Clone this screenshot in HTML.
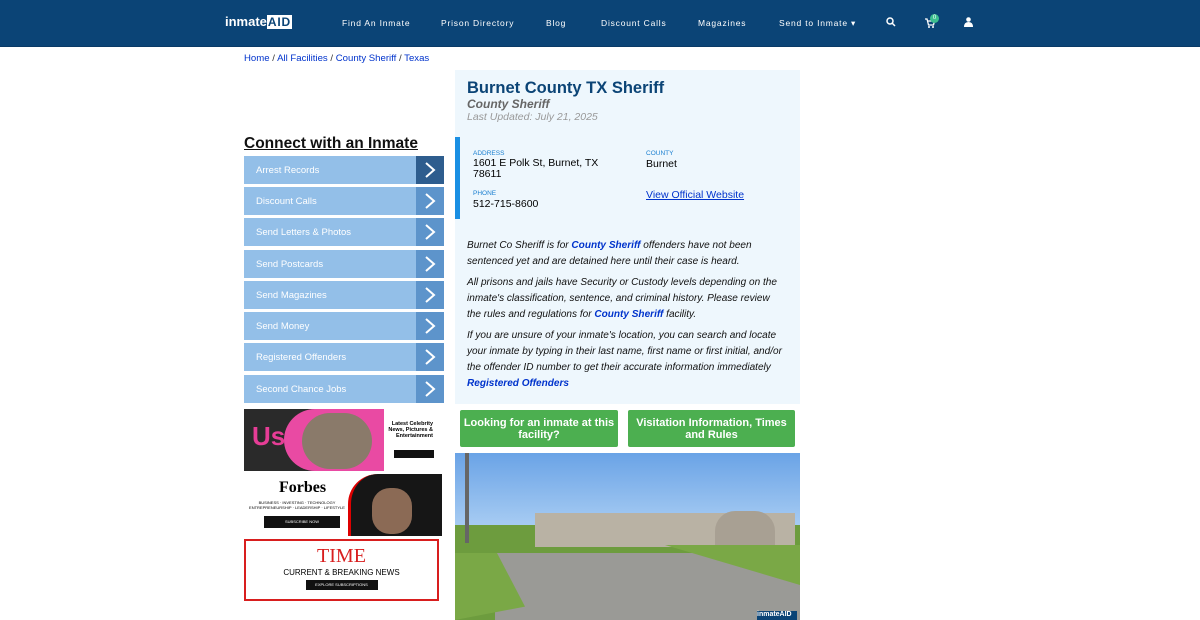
<!DOCTYPE html><html><head><style>
body{margin:0;width:1200px;height:620px;overflow:hidden;background:#fff;font-family:"Liberation Sans",sans-serif;position:relative}
.nav{position:absolute;left:0;top:0;width:1200px;height:46px;background:#0b4476;border-bottom:1px solid #0a3a66}
.nav span{position:absolute;top:18px;color:#fff;font-size:8.5px;letter-spacing:.8px}
.a{position:absolute}
.crumb{left:244px;top:53px;font-size:9.6px;color:#333}
.crumb b{font-weight:normal;color:#0033cc}
.side{left:244px;width:200px;height:28px;background:#93bfe8;color:#fff;font-size:9.5px}
.side span{position:absolute;left:12px;top:9px}
.side i{position:absolute;right:0;top:0;width:28px;height:28px;background:#5d94cb}
.side i svg{position:absolute;left:7px;top:5px}
.btn{top:410px;height:37px;background:#4caf50;color:#fff;font-weight:bold;font-size:11px;text-align:center;border-radius:2px;line-height:12px;display:flex;align-items:center;justify-content:center}
.p{font-size:10.05px;font-style:italic;color:#111;line-height:16px;margin:0 0 5px}
.p b{color:#0033cc}
.lab{font-size:6.5px;color:#1a7fd0}
</style></head><body>
<div class="nav">
<span style="left:225px;top:14px;font-size:13px;font-weight:bold;letter-spacing:0">inmate<span style="position:static;background:#fff;color:#0b4476;padding:0 1px;font-size:12px">AID</span></span>
<span style="left:342px">Find An Inmate</span>
<span style="left:441px">Prison Directory</span>
<span style="left:546px">Blog</span>
<span style="left:601px">Discount Calls</span>
<span style="left:698px">Magazines</span>
<span style="left:779px">Send to Inmate ▾</span>
<svg class="a" style="left:886px;top:17px" width="10" height="10"><circle cx="4" cy="4" r="3" stroke="#fff" stroke-width="1.5" fill="none"/><path d="M6 6L9 9" stroke="#fff" stroke-width="1.5"/></svg>
<svg class="a" style="left:925px;top:18px" width="10" height="10"><path d="M0 1H2L3.5 7H8.5L9.5 3H3" stroke="#fff" stroke-width="1.3" fill="none"/><circle cx="4" cy="9" r="1" fill="#fff"/><circle cx="8" cy="9" r="1" fill="#fff"/></svg>
<div class="a" style="left:930px;top:14px;width:9px;height:9px;border-radius:50%;background:#3cbf8f;color:#fff;font-size:6px;text-align:center;line-height:9px">0</div>
<svg class="a" style="left:964px;top:17px" width="9" height="10"><circle cx="4.5" cy="2.5" r="2.3" fill="#fff"/><path d="M0 10Q0 5 4.5 5Q9 5 9 10Z" fill="#fff"/></svg>
</div>
<div class="a crumb"><b>Home</b> / <b>All Facilities</b> / <b>County Sheriff</b> / <b>Texas</b></div>
<div class="a" style="left:244px;top:135px;font-size:15.5px;font-weight:bold;text-decoration:underline;color:#111">Connect with an Inmate</div>
<div class="a side" style="top:156px"><span>Arrest Records</span><i style="background:#2e5d8e"><svg width="14" height="18"><path d="M3 2L11 9L3 16" stroke="#fff" stroke-width="2" fill="none"/></svg></i></div>
<div class="a side" style="top:187px"><span>Discount Calls</span><i><svg width="14" height="18"><path d="M3 2L11 9L3 16" stroke="#fff" stroke-width="2" fill="none"/></svg></i></div>
<div class="a side" style="top:218px"><span>Send Letters &amp; Photos</span><i><svg width="14" height="18"><path d="M3 2L11 9L3 16" stroke="#fff" stroke-width="2" fill="none"/></svg></i></div>
<div class="a side" style="top:250px"><span>Send Postcards</span><i><svg width="14" height="18"><path d="M3 2L11 9L3 16" stroke="#fff" stroke-width="2" fill="none"/></svg></i></div>
<div class="a side" style="top:281px"><span>Send Magazines</span><i><svg width="14" height="18"><path d="M3 2L11 9L3 16" stroke="#fff" stroke-width="2" fill="none"/></svg></i></div>
<div class="a side" style="top:312px"><span>Send Money</span><i><svg width="14" height="18"><path d="M3 2L11 9L3 16" stroke="#fff" stroke-width="2" fill="none"/></svg></i></div>
<div class="a side" style="top:343px"><span>Registered Offenders</span><i><svg width="14" height="18"><path d="M3 2L11 9L3 16" stroke="#fff" stroke-width="2" fill="none"/></svg></i></div>
<div class="a side" style="top:375px"><span>Second Chance Jobs</span><i><svg width="14" height="18"><path d="M3 2L11 9L3 16" stroke="#fff" stroke-width="2" fill="none"/></svg></i></div>
<!-- ads -->
<div class="a" style="left:244px;top:409px;width:195px;height:62px;background:#fff">
<div class="a" style="left:0;top:0;width:140px;height:62px;background:#2a2a2a"></div>
<div class="a" style="left:40px;top:0;width:100px;height:62px;background:#e94aa3;border-radius:60px 0 0 60px"></div>
<div class="a" style="left:58px;top:4px;width:70px;height:56px;background:#8a7a6a;border-radius:30px"></div>
<div class="a" style="left:8px;top:12px;font-size:26px;font-weight:bold;color:#e63d96">Us</div>
<div class="a" style="left:143px;top:12px;font-size:5.5px;font-weight:bold;text-align:right;width:46px">Latest Celebrity News, Pictures &amp; Entertainment</div>
<div class="a" style="left:150px;top:41px;width:40px;height:8px;background:#111"></div>
</div>
<div class="a" style="left:244px;top:474px;width:195px;height:62px;background:#fff">
<div class="a" style="left:35px;top:5px;font-family:'Liberation Serif',serif;font-weight:bold;font-size:16px">Forbes</div>
<div class="a" style="left:3px;top:26px;font-size:4px;width:100px;text-align:center">BUSINESS · INVESTING · TECHNOLOGY ENTREPRENEURSHIP · LEADERSHIP · LIFESTYLE</div>
<div class="a" style="left:20px;top:42px;width:76px;height:12px;background:#111;color:#fff;font-size:4px;text-align:center;line-height:12px">SUBSCRIBE NOW</div>
<div class="a" style="left:104px;top:0;width:91px;height:62px;background:#161616;border-radius:30px 0 0 0;border-left:3px solid #d00"></div>
<div class="a" style="left:128px;top:14px;width:40px;height:46px;background:#8b6a55;border-radius:18px"></div>
</div>
<div class="a" style="left:244px;top:539px;width:191px;height:58px;border:2px solid #d81e1e;background:#fff;text-align:center">
<div style="font-family:'Liberation Serif',serif;color:#d81e1e;font-size:20px;margin-top:5px;line-height:20px">TIME</div>
<div style="font-size:8px;margin-top:2px">CURRENT &amp; BREAKING NEWS</div>
<div style="margin:3px auto 0;width:72px;height:10px;background:#111;color:#fff;font-size:4px;line-height:10px">EXPLORE SUBSCRIPTIONS</div>
</div>
<!-- right -->
<div class="a" style="left:455px;top:70px;width:345px;height:334px;background:#eef7fd"></div>
<div class="a" style="left:467px;top:79px;font-size:16.5px;font-weight:bold;color:#0b4476">Burnet County TX Sheriff</div>
<div class="a" style="left:467px;top:97px;font-size:12px;font-weight:bold;font-style:italic;color:#666">County Sheriff</div>
<div class="a" style="left:467px;top:111px;font-size:10.5px;font-style:italic;color:#999">Last Updated: July 21, 2025</div>
<div class="a" style="left:455px;top:137px;width:345px;height:82px;background:#eef7fd;border-left:5px solid #1a8fe3;box-sizing:border-box"></div>
<div class="a lab" style="left:473px;top:150px">ADDRESS</div>
<div class="a" style="left:473px;top:158px;font-size:10.5px;line-height:11px">1601 E Polk St, Burnet, TX<br>78611</div>
<div class="a lab" style="left:473px;top:190px">PHONE</div>
<div class="a" style="left:473px;top:198px;font-size:10.5px">512-715-8600</div>
<div class="a lab" style="left:646px;top:150px">COUNTY</div>
<div class="a" style="left:646px;top:158px;font-size:10.5px">Burnet</div>
<div class="a" style="left:646px;top:189px;font-size:10.5px;color:#0033cc;text-decoration:underline">View Official Website</div>
<div class="a" style="left:467px;top:238px;width:317px">
<p class="p">Burnet Co Sheriff is for <b>County Sheriff</b> offenders have not been sentenced yet and are detained here until their case is heard.</p>
<p class="p">All prisons and jails have Security or Custody levels depending on the inmate's classification, sentence, and criminal history. Please review the rules and regulations for <b>County Sheriff</b> facility.</p>
<p class="p">If you are unsure of your inmate's location, you can search and locate your inmate by typing in their last name, first name or first initial, and/or the offender ID number to get their accurate information immediately <b>Registered Offenders</b></p>
</div>
<div class="a btn" style="left:460px;width:158px">Looking for an inmate at this<br>facility?</div>
<div class="a btn" style="left:628px;width:167px">Visitation Information, Times<br>and Rules</div>
<div class="a" style="left:455px;top:453px;width:345px;height:167px;overflow:hidden;background:linear-gradient(#6aa3e6,#a9cdf3 45%)">
<div class="a" style="left:0;top:72px;width:345px;height:95px;background:#6d9c3e"></div>
<div class="a" style="left:80px;top:60px;width:260px;height:34px;background:#b9b2a4"></div>
<div class="a" style="left:260px;top:58px;width:60px;height:36px;background:#a8a093;border-radius:20px 20px 0 0"></div>
<div class="a" style="left:10px;top:0;width:4px;height:90px;background:#666"></div>
<div class="a" style="left:40px;top:100px;width:305px;height:67px;background:#9a9a96"></div>
<div class="a" style="left:0;top:100px;width:70px;height:67px;background:#7aa846;clip-path:polygon(0 0,60% 0,100% 80%,0 100%)"></div>
<div class="a" style="left:210px;top:92px;width:135px;height:40px;background:#7aa846;clip-path:polygon(0 0,100% 0,100% 100%)"></div>
<div class="a" style="left:302px;top:158px;width:40px;height:9px;background:#0b4476;color:#fff;font-size:7px;font-weight:bold">inmateAID</div>
</div>
</body></html>
